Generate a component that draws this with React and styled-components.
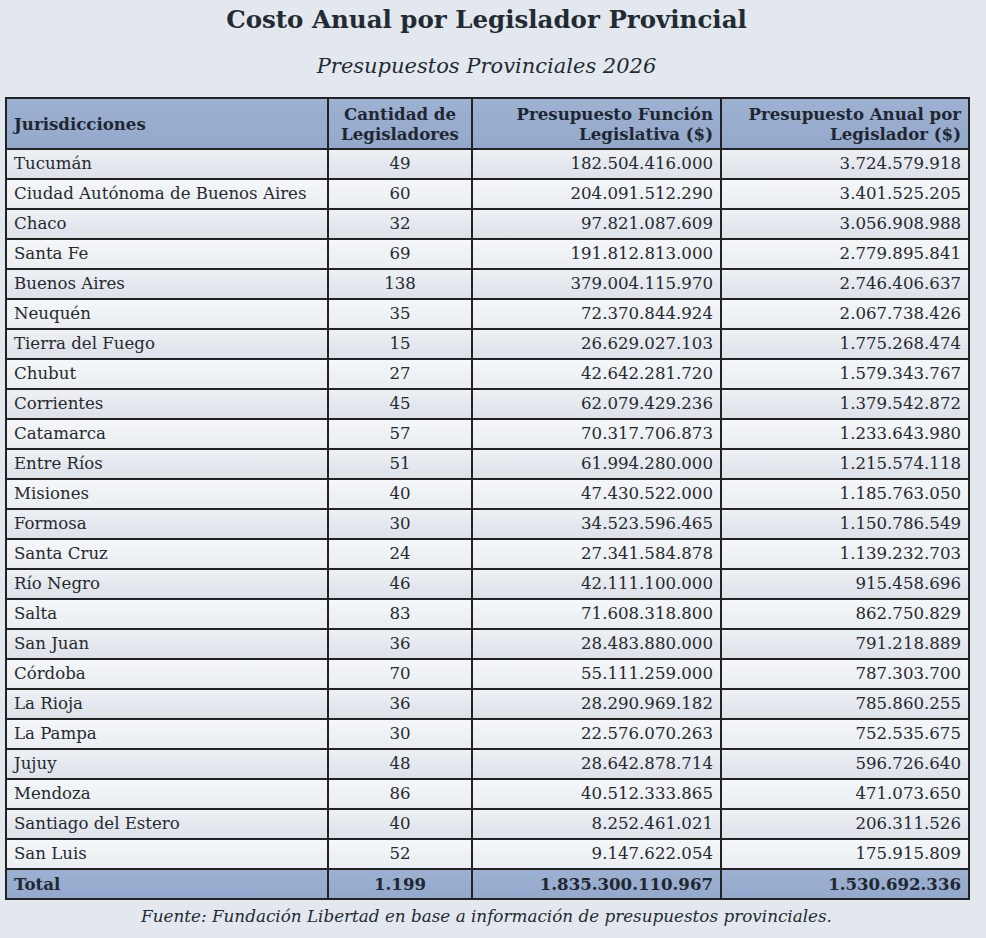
import React from "react";
import styled, { createGlobalStyle } from "styled-components";

const Global = createGlobalStyle`
  html, body { margin: 0; padding: 0; background: #e3e8ee; }
  body { font-family: "DejaVu Serif", serif; color: #222; }
`;

const Page = styled.div`
  width: 986px;
  padding: 4px 0 0 5px;
  box-sizing: border-box;
  display: flex;
  flex-direction: column;
`;

const Title = styled.h1`
  margin: 0;
  width: 963px;
  text-align: center;
  font-size: 24.5px;
  font-weight: bold;
  line-height: 32px;
  color: #222a33;
`;

const Subtitle = styled.h2`
  margin: 16px 0 0;
  width: 963px;
  text-align: center;
  font-size: 21px;
  font-weight: normal;
  font-style: italic;
  line-height: 28px;
  color: #222a33;
`;

const Table = styled.table`
  margin-top: 17px;
  width: 963px;
  border-collapse: collapse;
  border: 2px solid #222;
  table-layout: fixed;
  font-size: 16.6px;
`;

const Th = styled.th`
  background: linear-gradient(#9db1d1, #93a9cc);
  border: 2px solid #222;
  padding: 2px 7px 2px 7px;
  height: 51px;
  box-sizing: border-box;
  font-weight: bold;
  font-size: 16.6px;
  line-height: 20px;
  color: #1f2630;
  text-align: ${(p) => p.$align || "right"};
`;

const Row = styled.tr`
  background: ${(p) =>
    p.$odd
      ? "linear-gradient(#eef1f5, #dce1e8)"
      : "linear-gradient(#f5f7f9, #e9edf1)"};
`;

const Td = styled.td`
  border: 2px solid #222;
  padding: 0 7px;
  height: 30px;
  box-sizing: border-box;
  line-height: 26px;
  color: #26292d;
  text-align: ${(p) => p.$align || "right"};
  white-space: nowrap;
`;

const TotalRow = styled.tr`
  background: linear-gradient(#9db1d1, #93a9cc);
`;

const TotalTd = styled(Td)`
  font-weight: bold;
  color: #1f2630;
`;

const Source = styled.p`
  margin: 5px 0 0;
  width: 963px;
  text-align: center;
  font-style: italic;
  font-size: 16.8px;
  line-height: 22px;
  color: #222a33;
`;

const rows = [
  ["Tucumán", "49", "182.504.416.000", "3.724.579.918"],
  ["Ciudad Autónoma de Buenos Aires", "60", "204.091.512.290", "3.401.525.205"],
  ["Chaco", "32", "97.821.087.609", "3.056.908.988"],
  ["Santa Fe", "69", "191.812.813.000", "2.779.895.841"],
  ["Buenos Aires", "138", "379.004.115.970", "2.746.406.637"],
  ["Neuquén", "35", "72.370.844.924", "2.067.738.426"],
  ["Tierra del Fuego", "15", "26.629.027.103", "1.775.268.474"],
  ["Chubut", "27", "42.642.281.720", "1.579.343.767"],
  ["Corrientes", "45", "62.079.429.236", "1.379.542.872"],
  ["Catamarca", "57", "70.317.706.873", "1.233.643.980"],
  ["Entre Ríos", "51", "61.994.280.000", "1.215.574.118"],
  ["Misiones", "40", "47.430.522.000", "1.185.763.050"],
  ["Formosa", "30", "34.523.596.465", "1.150.786.549"],
  ["Santa Cruz", "24", "27.341.584.878", "1.139.232.703"],
  ["Río Negro", "46", "42.111.100.000", "915.458.696"],
  ["Salta", "83", "71.608.318.800", "862.750.829"],
  ["San Juan", "36", "28.483.880.000", "791.218.889"],
  ["Córdoba", "70", "55.111.259.000", "787.303.700"],
  ["La Rioja", "36", "28.290.969.182", "785.860.255"],
  ["La Pampa", "30", "22.576.070.263", "752.535.675"],
  ["Jujuy", "48", "28.642.878.714", "596.726.640"],
  ["Mendoza", "86", "40.512.333.865", "471.073.650"],
  ["Santiago del Estero", "40", "8.252.461.021", "206.311.526"],
  ["San Luis", "52", "9.147.622.054", "175.915.809"],
];

export default function App() {
  return (
    <Page>
      <Global />
      <Title>Costo Anual por Legislador Provincial</Title>
      <Subtitle>Presupuestos Provinciales 2026</Subtitle>
      <Table>
        <colgroup>
          <col style={{ width: 322 }} />
          <col style={{ width: 144 }} />
          <col style={{ width: 249 }} />
          <col style={{ width: 248 }} />
        </colgroup>
        <thead>
          <tr>
            <Th $align="left">Jurisdicciones</Th>
            <Th $align="center">
              Cantidad de
              <br />
              Legisladores
            </Th>
            <Th>
              Presupuesto Función
              <br />
              Legislativa ($)
            </Th>
            <Th>
              Presupuesto Anual por
              <br />
              Legislador ($)
            </Th>
          </tr>
        </thead>
        <tbody>
          {rows.map((r, i) => (
            <Row key={r[0]} $odd={i % 2 === 0}>
              <Td $align="left">{r[0]}</Td>
              <Td $align="center">{r[1]}</Td>
              <Td>{r[2]}</Td>
              <Td>{r[3]}</Td>
            </Row>
          ))}
          <TotalRow>
            <TotalTd $align="left">Total</TotalTd>
            <TotalTd $align="center">1.199</TotalTd>
            <TotalTd>1.835.300.110.967</TotalTd>
            <TotalTd>1.530.692.336</TotalTd>
          </TotalRow>
        </tbody>
      </Table>
      <Source>
        Fuente: Fundación Libertad en base a información de presupuestos
        provinciales.
      </Source>
    </Page>
  );
}
